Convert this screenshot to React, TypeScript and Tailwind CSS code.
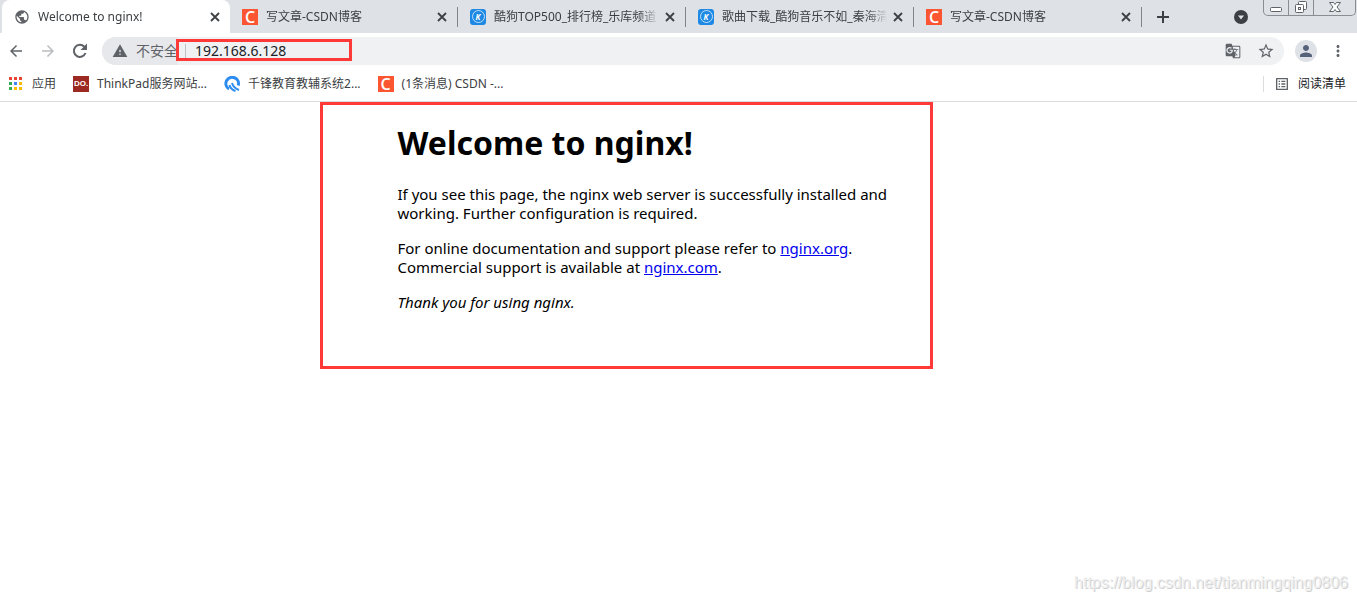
import React from 'react';
import {
  MdArrowBack,
  MdArrowForward,
  MdGTranslate,
  MdMoreVert,
  MdOutlineListAlt,
  MdPerson,
  MdPublic,
  MdStarBorder,
  MdWarning,
} from 'react-icons/md';

function CsdnIcon() {
  return (
    <span className="flex h-4 w-4 shrink-0 items-center justify-center bg-[#fc5531] font-['Open_Sans',sans-serif] text-base leading-4 font-semibold text-white">
      C
    </span>
  );
}

function KugouIcon() {
  return (
    <span className="flex h-4 w-4 shrink-0 items-center justify-center rounded-[3px] bg-[#1e88e5]">
      <span className="flex h-[13px] w-[13px] items-center justify-center rounded-full border border-white/70 text-[8px] leading-none font-bold text-white italic">
        K
      </span>
    </span>
  );
}

function ThinkPadIcon() {
  return (
    <span className="flex h-4 w-4 shrink-0 items-center justify-center bg-[#9c2a22] font-['Liberation_Sans',sans-serif] text-[8px] leading-none font-bold text-white">
      DO.
    </span>
  );
}

function QianfengIcon() {
  return (
    <svg className="h-4 w-4 shrink-0" viewBox="0 0 16 16" fill="none" stroke="#2d8cf0">
      <path d="M5 13A6.300 6.300 0 1 1 14.200 9.500" strokeWidth="3" />
      <path d="M8 7c1 3.500 3 5.500 7 7" strokeWidth="2" />
      <path d="M5.500 9c.8 3 2.800 5 6 6" strokeWidth="2" />
    </svg>
  );
}

function AppsIcon() {
  const colors = ['#ea4335', '#ea4335', '#ea4335', '#34a853', '#4285f4', '#fbbc04', '#34a853', '#fbbc04', '#fbbc04'];

  return (
    <svg className="h-4 w-4 shrink-0" viewBox="0 0 16 16">
      {colors.map((color, index) => (
        <rect key={index} x={1 + (index % 3) * 5} y={1 + Math.floor(index / 3) * 5} width="3" height="3" fill={color} />
      ))}
    </svg>
  );
}

function CloseIcon() {
  return (
    <svg className="h-[14px] w-[14px]" viewBox="0 0 14 14" stroke="#3c4043" strokeWidth="1.800">
      <path d="M3 3l8 8M11 3l-8 8" />
    </svg>
  );
}

function PlusIcon() {
  return (
    <svg className="h-[18px] w-[18px]" viewBox="0 0 18 18" stroke="#3c4043" strokeWidth="2">
      <path d="M9 3v12M3 9h12" />
    </svg>
  );
}

function ReloadIcon() {
  return (
    <svg className="h-[18px] w-[18px]" viewBox="0 0 18 18">
      <path d="M14.500 11A6 6 0 1 1 13.300 4.800" fill="none" stroke="#5f6368" strokeWidth="2" />
      <path d="M16 1.500v6.500H9.500z" fill="#5f6368" />
    </svg>
  );
}

const tabs = [
  { title: 'Welcome to nginx!', icon: <MdPublic className="h-4 w-4 shrink-0 text-[#5f6368]" />, active: true },
  { title: '写文章-CSDN博客', icon: <CsdnIcon />, active: false },
  { title: '酷狗TOP500_排行榜_乐库频道', icon: <KugouIcon />, active: false },
  { title: '歌曲下载_酷狗音乐不如_秦海清', icon: <KugouIcon />, active: false },
  { title: '写文章-CSDN博客', icon: <CsdnIcon />, active: false },
];

const bookmarks = [
  { title: '应用', icon: <AppsIcon /> },
  { title: 'ThinkPad服务网站...', icon: <ThinkPadIcon /> },
  { title: '千锋教育教辅系统2...', icon: <QianfengIcon /> },
  { title: '(1条消息) CSDN -...', icon: <CsdnIcon /> },
];

function TabStrip() {
  return (
    <div className="flex h-[33px] bg-[#dee1e6] pl-[2px]">
      {tabs.map((tab, index) => (
        <div
          key={index}
          className={`flex min-w-0 basis-[228px] items-center pr-2 pl-3 ${
            tab.active ? 'rounded-t-lg bg-white' : ''
          }`}
        >
          {tab.icon}
          <span className="ml-2 min-w-0 flex-1 [mask-image:linear-gradient(to_right,black_calc(100%-20px),transparent)] whitespace-nowrap">
            {tab.title}
          </span>
          <button type="button" aria-label="关闭" className="ml-1 shrink-0">
            <CloseIcon />
          </button>
          {!tab.active && <span className="-mr-2 ml-2 h-5 w-px shrink-0 bg-[#80868b]" />}
        </div>
      ))}
      <button type="button" aria-label="打开新的标签页" className="ml-3 shrink-0">
        <PlusIcon />
      </button>
      <button type="button" aria-label="搜索标签页" className="mr-[15px] ml-auto shrink-0">
        <svg className="h-[14px] w-[14px]" viewBox="0 0 14 14">
          <circle cx="7" cy="7" r="7" fill="#3c4043" />
          <path d="M4 5.500h6L7 9.500z" fill="#dee1e6" />
        </svg>
      </button>
      <WindowControls />
    </div>
  );
}

function WindowControls() {
  return (
    <div className="mr-px flex h-4 shrink-0 divide-x divide-[#8a8d91] rounded-b-[5px] border border-t-0 border-[#8a8d91]">
      <button type="button" aria-label="最小化" className="flex w-[25px] justify-center">
        <svg className="h-[14px] w-[14px]" viewBox="0 0 14 14" fill="#fff" stroke="#5f6368">
          <rect x="1.500" y="7.500" width="11" height="4" rx="1" />
        </svg>
      </button>
      <button type="button" aria-label="还原" className="flex w-[25px] justify-center">
        <svg className="h-[14px] w-[14px]" viewBox="0 0 14 14" fill="#fff" stroke="#5f6368">
          <rect x="4.500" y="1.500" width="8" height="8" rx="1" />
          <rect x="1.500" y="4.500" width="8" height="8" rx="1" />
          <rect x="4.500" y="7.500" width="2" height="2" />
        </svg>
      </button>
      <button type="button" aria-label="关闭窗口" className="flex w-[41px] justify-center">
        <svg className="h-[14px] w-[14px]" viewBox="0 0 14 14" fill="#fff" stroke="#5f6368">
          <path d="M1.500 2.500h4L7 4.500l1.500-2h4L9 7l3.500 4.500h-4L7 9.500l-1.500 2h-4L5 7z" />
        </svg>
      </button>
    </div>
  );
}

function Toolbar() {
  return (
    <div className="flex h-9 items-center pr-[10px] pl-[7px] text-[#5f6368]">
      <div className="flex w-[95px] shrink-0 gap-[14px]">
        <button type="button" aria-label="后退">
          <MdArrowBack className="h-[18px] w-[18px] text-[#5f6368]" />
        </button>
        <button type="button" aria-label="前进">
          <MdArrowForward className="h-[18px] w-[18px] text-[#babcbe]" />
        </button>
        <button type="button" aria-label="重新加载">
          <ReloadIcon />
        </button>
      </div>
      <div className="flex h-7 min-w-0 flex-1 items-center rounded-full bg-[#eff1f3] pr-[9px]">
        <div className="relative flex h-7 items-center rounded-l-full bg-[#e6e8eb] pl-[10px] text-sm">
          <MdWarning className="mr-2 h-4 w-4" />
          <label htmlFor="address" className="w-[42px] whitespace-nowrap">
            不安全
          </label>
          <div className="absolute top-[2px] left-[74px] h-[22px] w-[176px] border-[3px] border-[#ff3838]" />
        </div>
        <span className="ml-[7px] h-[14px] w-px bg-[#bdc1c6]" />
        <input
          id="address"
          type="text"
          defaultValue="192.168.6.128"
          className="ml-[9px] min-w-0 flex-1 bg-transparent text-sm text-[#202124] outline-none"
        />
        <button type="button" aria-label="翻译此网页" className="mr-4">
          <MdGTranslate className="h-4 w-4" />
        </button>
        <button type="button" aria-label="为此标签页添加书签">
          <MdStarBorder className="h-[18px] w-[18px]" />
        </button>
      </div>
      <button
        type="button"
        aria-label="用户"
        className="ml-[11px] flex h-[22px] w-[22px] items-center justify-center rounded-full bg-[#dee1e6]"
      >
        <MdPerson className="h-[18px] w-[18px] text-[#56617a]" />
      </button>
      <button type="button" aria-label="菜单" className="ml-3">
        <MdMoreVert className="h-[18px] w-[18px]" />
      </button>
    </div>
  );
}

function BookmarksBar() {
  return (
    <div className="flex h-[33px] items-center border-b border-[#dadce0] pr-[11px] pb-[3px] pl-2">
      <nav className="flex gap-[17px]">
        {bookmarks.map((bookmark) => (
          <a key={bookmark.title} href="#" className="flex items-center gap-2 whitespace-nowrap">
            {bookmark.icon}
            {bookmark.title}
          </a>
        ))}
      </nav>
      <a href="#" className="ml-auto flex items-center gap-2 border-l border-[#dadce0] pl-[10px] text-[#202124]">
        <MdOutlineListAlt className="h-4 w-4 text-[#5f6368]" />
        阅读清单
      </a>
    </div>
  );
}

function WelcomePage() {
  return (
    <main className="relative mx-auto w-[562px] max-w-full pt-[21px] font-['Noto_Sans',sans-serif] text-[15px] leading-[19px] text-black">
      <div className="absolute top-0 -left-[78px] h-[267px] w-[613px] border-[3px] border-[#ff3838]" />
      <h1 className="mb-[22px] text-[32px] leading-10 font-bold">Welcome to nginx!</h1>
      <p className="mb-4">
        If you see this page, the nginx web server is successfully installed and
        <br />
        working. Further configuration is required.
      </p>
      <p className="mb-4">
        For online documentation and support please refer to{' '}
        <a href="http://nginx.org/" className="text-[#0000ee] underline">nginx.org</a>.
        <br />
        Commercial support is available at{' '}
        <a href="http://nginx.com/" className="text-[#0000ee] underline">nginx.com</a>.
      </p>
      <p>
        <em>Thank you for using nginx.</em>
      </p>
    </main>
  );
}

export default function App() {
  return (
    <div className="flex min-h-screen flex-col bg-white font-['Noto_Sans','Noto_Sans_CJK_SC',sans-serif] text-xs text-[#3c4043]">
      <header>
        <TabStrip />
        <Toolbar />
        <BookmarksBar />
      </header>
      <WelcomePage />
      <footer className="mt-auto pr-[9px] pb-2 text-right font-['Liberation_Sans',sans-serif] text-base leading-5 text-[#eeeeee] [text-shadow:1px_1px_0_#d0d0d0]">
        https://blog.csdn.net/tianmingqing0806
      </footer>
    </div>
  );
}
